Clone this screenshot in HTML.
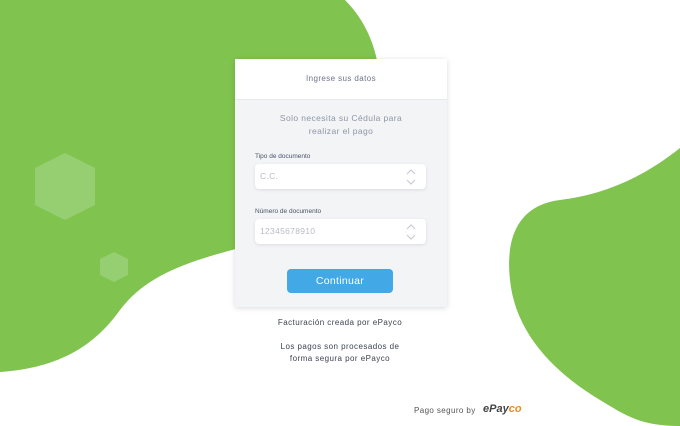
<!DOCTYPE html>
<html><head><style>
body{margin:0;width:680px;height:426px;overflow:hidden;background:#fff;font-family:"Liberation Sans",sans-serif;position:relative}
svg.bg{position:absolute;left:0;top:0}
.card{position:absolute;left:235px;top:59px;width:212px;height:248px;background:#f3f4f6;box-shadow:0 1px 6px rgba(0,0,0,.15);border-radius:2px}
.hd{height:40px;background:#fff;text-align:center;line-height:40px;font-size:8px;letter-spacing:.4px;color:#6b7488;border-bottom:1px solid #e8e9ec}
.sub{text-align:center;font-size:8.5px;letter-spacing:.4px;color:#8d95a6;line-height:13px;margin-top:12px}
.lbl{position:absolute;left:20px;font-size:6.5px;color:#4a5266}
.in{position:absolute;left:20px;width:171px;height:25px;background:#fff;border-radius:4px;box-shadow:0 1px 3px rgba(0,0,0,.1);font-size:8.5px;letter-spacing:.3px;color:#b7bcc6;line-height:25px;text-indent:5px}
.in svg{position:absolute;right:10px;top:5px}
.btn{position:absolute;left:52px;top:210px;width:106px;height:24px;background:#42a9e6;border-radius:4px;color:#fff;text-align:center;line-height:25px;font-size:10.5px;letter-spacing:.3px}
.t{position:absolute;width:680px;left:0;text-align:center;font-size:8px;letter-spacing:.45px;color:#3d4250}
</style></head><body>
<svg class="bg" width="680" height="426">
<path d="M0 0 L345 0 C365 20 380 50 380 90 C380 150 345 220 270 240 C200 258 150 270 120 310 C95 345 60 368 0 372 Z" fill="#80c34e"/>
<path d="M680 148 C640 180 600 195 560 200 C520 205 505 235 510 280 C515 330 550 370 600 400 C625 415 640 426 680 426 Z" fill="#80c34e"/>
<polygon points="65,153 95,168 95,205 65,220 35,205 35,168" fill="#96ce72"/>
<polygon points="114,252 128,259 128,275 114,282 100,275 100,259" fill="#96ce72"/>
</svg>
<div class="card">
<div class="hd">Ingrese sus datos</div>
<div class="sub">Solo necesita su Cédula para<br>realizar el pago</div>
<div class="lbl" style="top:94px">Tipo de documento</div>
<div class="in" style="top:105px">C.C.<svg width="10" height="16"><path d="M1 5 L5 1 L9 5 M1 11 L5 15 L9 11" fill="none" stroke="#c8ccd4" stroke-width="1.2"/></svg></div>
<div class="lbl" style="top:149px">Número de documento</div>
<div class="in" style="top:160px">12345678910<svg width="10" height="16"><path d="M1 5 L5 1 L9 5 M1 11 L5 15 L9 11" fill="none" stroke="#c8ccd4" stroke-width="1.2"/></svg></div>
<div class="btn">Continuar</div>
</div>
<div class="t" style="top:318px">Facturación creada por ePayco</div>
<div class="t" style="top:341px;line-height:12px">Los pagos son procesados de<br>forma segura por ePayco</div>
<div style="position:absolute;left:414px;top:406px;font-size:8px;letter-spacing:.4px;color:#555">Pago seguro by</div>
<div style="position:absolute;left:483px;top:403px;font-size:11px;font-weight:bold;font-style:italic;color:#444">ePay<span style="color:#f08a24">co</span></div>
</body></html>
